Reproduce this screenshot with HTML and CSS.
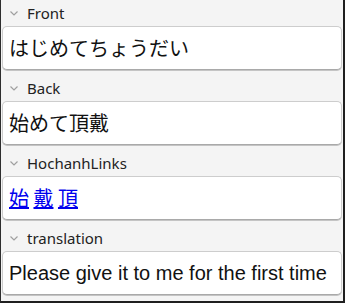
FILE: index.html
```html
<!DOCTYPE html>
<html lang="ja">
<head>
    <meta charset="UTF-8">
    <title>Editor</title>
    <link rel="stylesheet" href="styles.css">
</head>
<body>
    <div class="editor">
        <div class="field">
            <div class="field-label">
                <svg class="chevron" width="8" height="5" viewBox="0 0 8 5"><polyline points="0.5,0.5 4,4 7.5,0.5" fill="none" stroke="#a0a0a0" stroke-width="1.2"/></svg>
                <span>Front</span>
            </div>
            <div class="field-box">はじめてちょうだい</div>
        </div>

        <div class="field">
            <div class="field-label">
                <svg class="chevron" width="8" height="5" viewBox="0 0 8 5"><polyline points="0.5,0.5 4,4 7.5,0.5" fill="none" stroke="#a0a0a0" stroke-width="1.2"/></svg>
                <span>Back</span>
            </div>
            <div class="field-box">始めて頂戴</div>
        </div>

        <div class="field">
            <div class="field-label">
                <svg class="chevron" width="8" height="5" viewBox="0 0 8 5"><polyline points="0.5,0.5 4,4 7.5,0.5" fill="none" stroke="#a0a0a0" stroke-width="1.2"/></svg>
                <span>HochanhLinks</span>
            </div>
            <div class="field-box links"><a href="#">始</a> <a href="#">戴</a> <a href="#">頂</a></div>
        </div>

        <div class="field">
            <div class="field-label">
                <svg class="chevron" width="8" height="5" viewBox="0 0 8 5"><polyline points="0.5,0.5 4,4 7.5,0.5" fill="none" stroke="#a0a0a0" stroke-width="1.2"/></svg>
                <span>translation</span>
            </div>
            <div class="field-box latin">Please give it to me for the first time</div>
        </div>
    </div>
</body>
</html>
```

FILE: styles.css
```css
html, body {
    margin: 0;
    padding: 0;
}
.editor {
    box-sizing: border-box;
    height: 303px;
    width: 345px;
    background: #f4f4f4;
    border-left: 1px solid #2e2e2e;
    border-right: 2px solid #1f1f1f;
    border-bottom: 2px solid #1f1f1f;
    padding: 0 1px;
    display: flex;
    flex-direction: column;
    gap: 5px;
}
.field-label {
    height: 26px;
    display: flex;
    align-items: center;
    font-family: "Noto Sans", sans-serif;
    font-size: 15px;
    color: #222;
}
.chevron {
    margin: 1px 9px 0 8px;
}
.field-box {
    box-sizing: border-box;
    height: 44px;
    background: #fff;
    border: 1px solid #cdcdcd;
    border-bottom-color: #a9a9a9;
    border-radius: 5px;
    box-shadow: 0 1px 0 #c4c4c4;
    padding: 0 6px;
    font-family: "Noto Sans CJK JP", sans-serif;
    font-size: 20px;
    line-height: 42px;
    color: #111;
    white-space: nowrap;
}
.links a {
    color: #0000ee;
}
.latin {
    font-family: "Liberation Sans", Arial, sans-serif;
}
```
